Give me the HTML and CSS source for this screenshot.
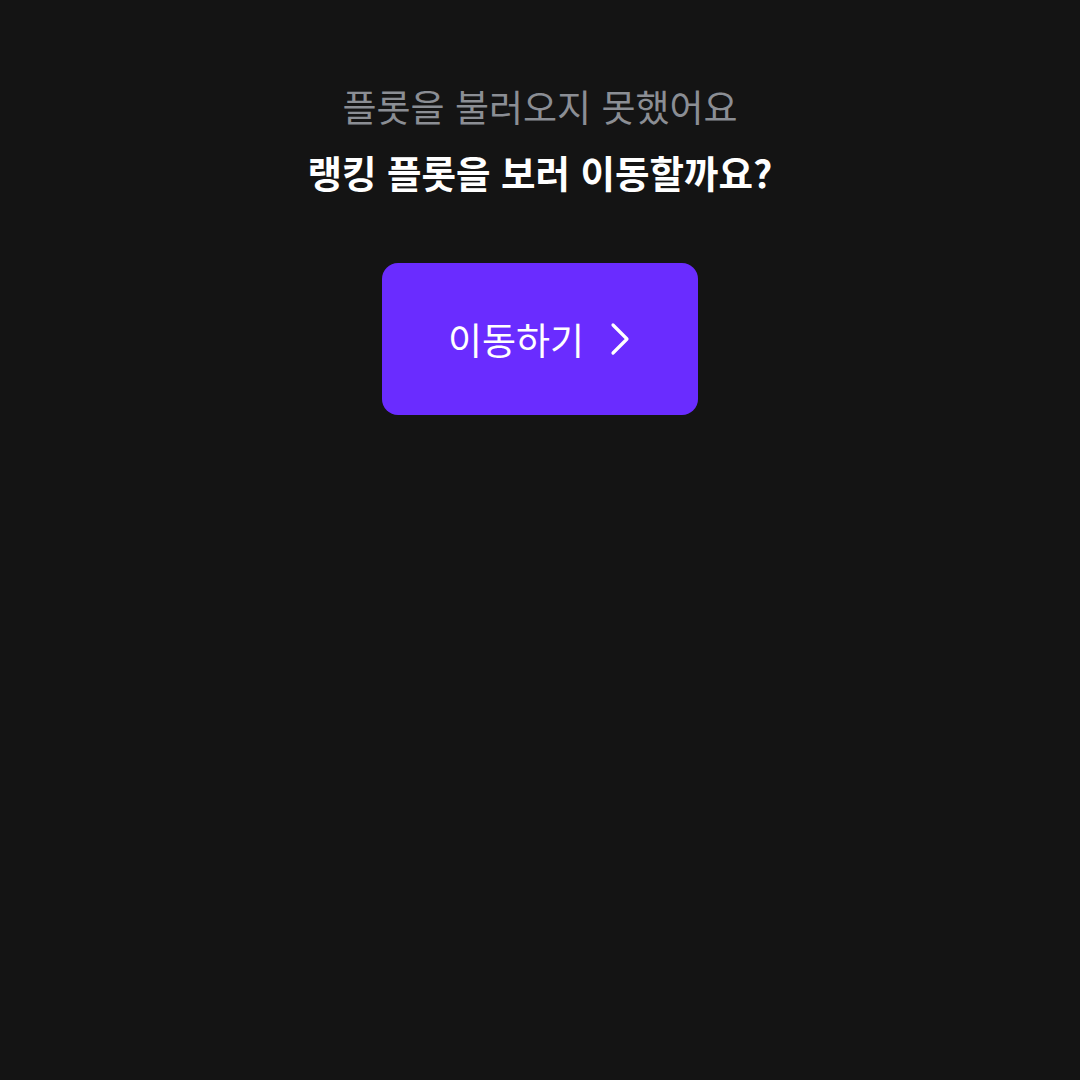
FILE: index.html
```html
<!DOCTYPE html>
<html lang="ko">
<head>
  <meta charset="UTF-8">
  <title>플롯</title>
  <link rel="stylesheet" href="styles.css">
</head>
<body>
  <div class="container">
    <p class="message">플롯을 불러오지 못했어요</p>
    <h1 class="question">랭킹 플롯을 보러 이동할까요?</h1>
    <button type="button" class="move-btn">
      <span>이동하기</span>
      <svg class="chevron" width="24" height="36" viewBox="0 0 24 36" fill="none">
        <path d="M5 4 L19 18 L5 32" stroke="#fff" stroke-width="3.2" stroke-linecap="round" stroke-linejoin="round"/>
      </svg>
    </button>
  </div>
</body>
</html>
```

FILE: styles.css
```css
* { box-sizing: border-box; }
html, body {
  height: 100%;
}
body {
  margin: 0;
  background: #141414;
  font-family: "Noto Sans CJK KR", "Noto Sans", sans-serif;
}
.container {
  display: flex;
  flex-direction: column;
  align-items: center;
  padding-top: 81px;
}
.message {
  margin: 0;
  font-size: 37px;
  line-height: 50px;
  color: #8b8e94;
  font-weight: 400;
}
.question {
  margin: 16px 0 0;
  font-size: 37.5px;
  line-height: 50px;
  color: #fff;
  font-weight: 700;
}
.move-btn {
  margin-top: 66px;
  width: 316px;
  height: 152px;
  border: none;
  border-radius: 16px;
  background: #6a2cff;
  color: #fff;
  font-family: inherit;
  font-size: 37px;
  display: flex;
  align-items: center;
  justify-content: center;
  gap: 24px;
  padding: 0 0 0 0;
  cursor: pointer;
}
.chevron {
  display: block;
}
```
